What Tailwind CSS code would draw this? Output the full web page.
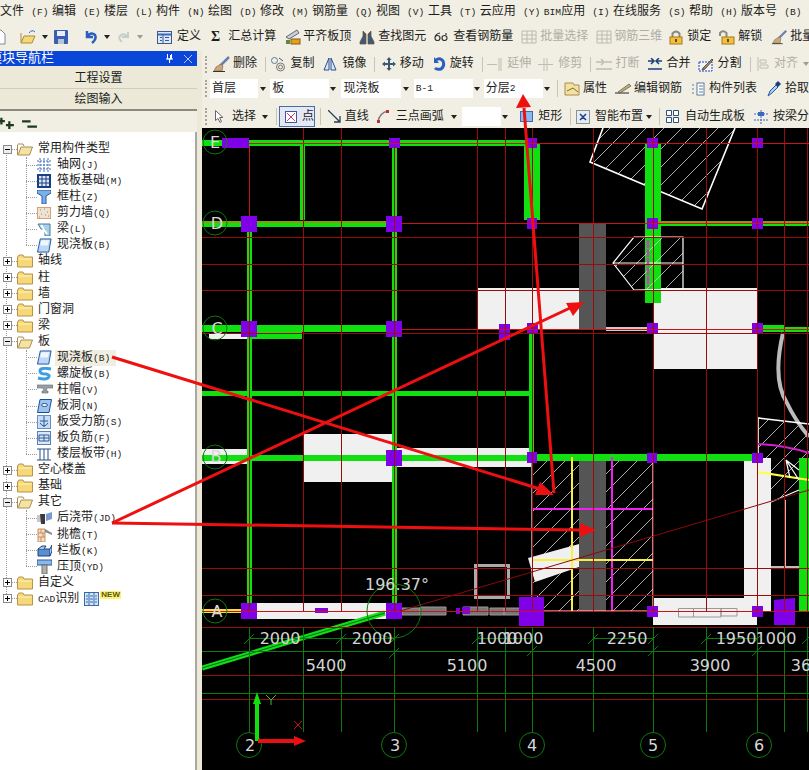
<!DOCTYPE html>
<html lang="zh">
<head>
<meta charset="UTF-8">
<title>钢筋算量</title>
<script src="https://cdn.jsdelivr.net/npm/@tailwindcss/browser@4"></script>
</head>
<body class="bg-[#ece9d8]">
<!-- shared icons -->
<svg class="hidden" width="0" height="0">
  <symbol id="caret" viewBox="0 0 6 4"><path d="M0 0H6L3 4Z" fill="#222"/></symbol>
  <symbol id="plus" viewBox="0 0 9 9"><rect x=".5" y=".5" width="8" height="8" fill="#fff" stroke="#8a8a8a"/><path d="M2 4.5H7M4.5 2V7" stroke="#000"/></symbol>
  <symbol id="minus" viewBox="0 0 9 9"><rect x=".5" y=".5" width="8" height="8" fill="#eee" stroke="#8a8a8a"/><path d="M2 4.5H7" stroke="#000"/></symbol>
  <symbol id="folder" viewBox="0 0 16 14"><path d="M.5 3V13H15.5V3H7L6 1H2Z" fill="#f6d878" stroke="#b8944a"/><path d="M1.500 5H14.500" stroke="#fff3c0"/></symbol>
  <symbol id="folderopen" viewBox="0 0 16 14"><path d="M.5 2.500V13H12.500L15.500 5H4L1.500 12" fill="#f6e3a4" stroke="#a88c50"/><path d="M1 2H6L7 4" fill="none" stroke="#a88c50"/></symbol>
  <symbol id="slab" viewBox="0 0 16 16"><path d="M3.500 1H15L12.500 15H.5Z" fill="#bcd8f8" stroke="#1a4f9a"/><path d="M4.500 2.500H13L11.500 8H3.500Z" fill="#eef6ff"/></symbol>
  <symbol id="lock" viewBox="0 0 16 16"><path d="M4.500 8V4.500Q8 .5 11.500 4.500V8" fill="none" stroke="#8a8a80" stroke-width="2"/><rect x="2" y="8" width="12" height="7" fill="#f0c040" stroke="#a87818"/><rect x="7" y="10" width="2" height="3" fill="#6a4a08"/></symbol>
  <symbol id="unlock" viewBox="0 0 16 16"><path d="M1 7V4Q4 .5 7.500 4V8" fill="none" stroke="#8a8a80" stroke-width="2"/><rect x="3" y="8" width="12" height="7" fill="#f0c040" stroke="#a87818"/><rect x="8" y="10" width="2" height="3" fill="#6a4a08"/></symbol>
  <symbol id="brush" viewBox="0 0 18 16"><path d="M16 1L7 10" stroke="#6a7fb0" stroke-width="2.500"/><path d="M8 8L3 11L1 15H9L10 10Z" fill="#c8a878" stroke="#806040" stroke-width=".6"/><path d="M0 15.500H12" stroke="#333"/></symbol>
  <symbol id="dis" viewBox="0 0 16 16"><path d="M1 2H15V14H1ZM1 6H15M1 10H15M6 2V14M11 2V14" fill="none" stroke="#bcbab0"/></symbol>
</svg>

<div class="relative w-[809px] h-[770px] overflow-hidden font-['Liberation_Mono','Noto_Sans_CJK_SC',monospace] text-[12px] leading-none text-[#1c1c1c]">

  <!-- menu -->
  <nav class="flex items-center gap-[3.5px] h-[21px] pt-[2px] bg-[#f1efe3] whitespace-nowrap">
    <span>文件 <small>(F)</small></span>
    <span>编辑 <small>(E)</small></span>
    <span>楼层 <small>(L)</small></span>
    <span>构件 <small>(N)</small></span>
    <span>绘图 <small>(D)</small></span>
    <span>修改 <small>(M)</small></span>
    <span>钢筋量 <small>(Q)</small></span>
    <span>视图 <small>(V)</small></span>
    <span>工具 <small>(T)</small></span>
    <span>云应用 <small>(Y)</small></span>
    <span><small>BIM</small>应用 <small>(I)</small></span>
    <span>在线服务 <small>(S)</small></span>
    <span>帮助 <small>(H)</small></span>
    <span>版本号 <small>(B)</small></span>
    <svg class="ml-[4px] w-[12px] h-[14px] shrink-0" viewBox="0 0 12 14"><circle cx="6" cy="7" r="5" fill="#e8b860"/><path d="M1 5Q6 0 11 5Z" fill="#8a5a20"/></svg>
  </nav>

  <!-- main toolbar -->
  <div class="flex items-center h-[30px] pt-[2px] bg-[#f1efe3] whitespace-nowrap">
    <svg class="ml-[-8px] w-[14px] h-4 shrink-0" viewBox="0 0 14 16"><path d="M1 1H9L13 5V15H1Z" fill="#fff" stroke="#7a8aa0"/></svg>
    <svg class="ml-[14px] w-4 h-4 shrink-0" viewBox="0 0 16 16"><path d="M1 4V14H12L15 7H4L1.500 13" fill="#f6d878" stroke="#a88c40"/><path d="M9 4Q12 0 15 3" fill="none" stroke="#2a6ad0"/></svg>
    <svg class="ml-[6px] w-[6px] h-1 shrink-0"><use href="#caret"/></svg>
    <svg class="ml-[6px] w-[14px] h-[14px] shrink-0" viewBox="0 0 14 14"><rect width="14" height="14" rx="1" fill="#3a5fb0"/><rect x="3" y="1" width="8" height="5" fill="#e8eef8"/><rect x="4" y="9" width="6" height="5" fill="#b8c4d8"/></svg>
    <span class="ml-[8px] w-px h-5 bg-[#c8c5b4]"></span>
    <svg class="ml-[8px] w-[13px] h-[14px] shrink-0" viewBox="0 0 13 14"><path d="M3 1V7H9M3 7Q7 1 11 5Q13 9 8 13" fill="none" stroke="#2a5fc0" stroke-width="2.500"/></svg>
    <svg class="ml-[7px] w-[6px] h-1 shrink-0"><use href="#caret"/></svg>
    <svg class="ml-[8px] w-[11px] h-[12px] shrink-0" viewBox="0 0 11 12"><path d="M10 1V6H4M10 6Q6 1 2 5Q0 8 4 11" fill="none" stroke="#c4cfc8" stroke-width="2"/></svg>
    <svg class="ml-[8px] w-[6px] h-1 shrink-0 opacity-40"><use href="#caret"/></svg>
    <svg class="ml-[14px] w-[15px] h-[13px] shrink-0" viewBox="0 0 15 13"><rect x=".5" y=".5" width="14" height="12" fill="#dce8f8" stroke="#3a5a90"/><path d="M1 3.500H14" stroke="#3a6ac0" stroke-width="2"/><path d="M6 3V12M3 6.500H5M3 9.500H5M8 6.500H12M8 9.500H12" stroke="#3a5a90"/></svg>
    <span class="ml-[5px]">定义</span>
    <span class="ml-[10px] font-bold font-['Liberation_Serif',serif] text-[14px]">Σ</span>
    <span class="ml-[8px]">汇总计算</span>
    <svg class="ml-[9px] w-4 h-4 shrink-0" viewBox="0 0 16 16"><path d="M1 8L12 1L14 4L4 10Z" fill="#c8d0d8" stroke="#667"/><rect x="6" y="10" width="9" height="5" fill="#e0a020" stroke="#8a5a10"/><rect x="1" y="11" width="4" height="4" fill="#5a8a3a"/></svg>
    <span class="ml-[2px]">平齐板顶</span>
    <svg class="ml-[8px] w-4 h-4 shrink-0" viewBox="0 0 16 16"><path d="M4 2V7L1 13V15H7V5ZM12 2V7L15 13V15H9V5Z" fill="#3a5a80" stroke="#7a4a20" stroke-width=".7"/></svg>
    <span class="ml-[3px]">查找图元</span>
    <svg class="ml-[8px] w-[14px] h-[10px] shrink-0" viewBox="0 0 14 10"><path d="M6 1Q1 2 1 6A2.500 2.500 0 1 0 6 6A2.500 2.500 0 1 0 1 6M8 6A2.500 2.500 0 1 0 13 6A2.500 2.500 0 1 0 8 6M12 3V1" fill="none" stroke="#333" stroke-width="1.200"/></svg>
    <span class="ml-[5px]">查看钢筋量</span>
    <svg class="ml-[8px] w-4 h-4 shrink-0"><use href="#dis"/></svg>
    <span class="ml-[3px] text-[#b0aea4]">批量选择</span>
    <svg class="ml-[8px] w-4 h-4 shrink-0"><use href="#dis"/></svg>
    <span class="ml-[2px] text-[#b0aea4]">钢筋三维</span>
    <svg class="ml-[6px] w-4 h-4 shrink-0"><use href="#lock"/></svg>
    <span class="ml-[3px]">锁定</span>
    <svg class="ml-[8px] w-4 h-4 shrink-0"><use href="#unlock"/></svg>
    <span class="ml-[3px]">解锁</span>
    <svg class="ml-[10px] w-4 h-4 shrink-0"><use href="#brush"/></svg>
    <span class="ml-[2px]">批量</span>
  </div>

  <div class="flex h-[719px]">
    <!-- module nav -->
    <aside class="w-[202px] shrink-0 flex flex-col pr-[5px]">
      <div class="flex items-center justify-between h-[15px] bg-[#0a46d8] text-white text-[13px] overflow-hidden whitespace-nowrap">
        <span class="ml-[-11px]">模块导航栏</span>
        <span class="flex items-center gap-[11px] pr-[5px]">
          <svg class="w-[7px] h-[9px]" viewBox="0 0 7 9"><path d="M1.500 0V5H5.500V0M0 5H7M3.500 5V9M4.500 1V5" fill="none" stroke="#fff"/></svg>
          <svg class="w-[8px] h-[8px]" viewBox="0 0 8 8"><path d="M0 0L8 8M8 0L0 8" stroke="#b8c8f0"/></svg>
        </span>
      </div>
      <div class="flex items-center justify-center h-[22px] mt-px pt-[2px] bg-[#ece9d8] border-b border-[#d0cdbc]">工程设置</div>
      <div class="flex items-center justify-center h-[22px] pt-[2px] bg-[#ece9d8] border-b-2 border-[#8c8a7c]">绘图输入</div>
      <div class="flex items-center h-[21px] pt-[5px] bg-[#f1efe3]">
        <svg class="ml-[-2px] w-[17px] h-[14px]" viewBox="0 0 15 11"><path d="M3 0V6M0 3H6M10 3V10M7 6.500H14" stroke="#1e3a1e" stroke-width="2"/></svg>
        <svg class="ml-[6px] w-[17px] h-[12px]" viewBox="0 0 16 11"><path d="M1 3H9M6 8H15" stroke="#1e3a1e" stroke-width="2"/></svg>
      </div>
      <div class="relative flex-1 pt-[9px] bg-white border-r-2 border-[#a8a8a0] whitespace-nowrap">
        <span class="absolute left-[6px] top-[17px] h-[449px] border-l border-dotted border-[#999]"></span>
        <span class="absolute left-[26px] top-[25px] h-[88px] border-l border-dotted border-[#999]"></span>
        <span class="absolute left-[26px] top-[218px] h-[104px] border-l border-dotted border-[#999]"></span>
        <span class="absolute left-[26px] top-[378px] h-[56px] border-l border-dotted border-[#999]"></span>

        <div class="relative flex items-center h-[16.07px]"><svg class="ml-[3px] w-[9px] h-[9px]"><use href="#minus"/></svg><span class="w-[5px] border-t border-dotted border-[#999]"></span><svg class="w-4 h-[14px]"><use href="#folderopen"/></svg><span class="ml-[5px]">常用构件类型</span></div>
        <div class="relative flex items-center h-[16.07px] pl-[26px]"><span class="w-[11px] border-t border-dotted border-[#999]"></span><svg class="w-[14px] h-[14px] mr-[2px]" viewBox="0 0 14 14"><path d="M0 3H14M0 7H14M0 11H14M3 0V14M7 0V14M11 0V14" stroke="#3a6ac0" stroke-dasharray="2 1"/></svg><span class="ml-[4px]">轴网<small>(J)</small></span></div>
        <div class="relative flex items-center h-[16.07px] pl-[26px]"><span class="w-[11px] border-t border-dotted border-[#999]"></span><svg class="w-[14px] h-[14px] mr-[2px]" viewBox="0 0 14 14"><rect x="1" y="1" width="12" height="12" fill="#dce8f8" stroke="#1a3f80" stroke-width="2"/><path d="M1 5H13M1 9H13M5 1V13M9 1V13" stroke="#1a3f80"/></svg><span class="ml-[4px]">筏板基础<small>(M)</small></span></div>
        <div class="relative flex items-center h-[16.07px] pl-[26px]"><span class="w-[11px] border-t border-dotted border-[#999]"></span><svg class="w-[14px] h-[14px] mr-[2px]" viewBox="0 0 14 14"><path d="M0 0H14V3L9 6V14H5V6L0 3Z" fill="#7ab0e8" stroke="#2a5a9a"/></svg><span class="ml-[4px]">框柱<small>(Z)</small></span></div>
        <div class="relative flex items-center h-[16.07px] pl-[26px]"><span class="w-[11px] border-t border-dotted border-[#999]"></span><svg class="w-[14px] h-[14px] mr-[2px]" viewBox="0 0 14 14"><rect x=".5" y="1.500" width="13" height="11" fill="#efe2d0" stroke="#d8a070"/><path d="M3 4H4M7 3H8M10 6H11M4 8H5M8 9H9M2 11H3M11 10H12" stroke="#8a8a8a"/></svg><span class="ml-[4px]">剪力墙<small>(Q)</small></span></div>
        <div class="relative flex items-center h-[16.07px] pl-[26px]"><span class="w-[11px] border-t border-dotted border-[#999]"></span><svg class="w-[14px] h-[14px] mr-[2px]" viewBox="0 0 14 14"><path d="M1 2H13V14H8V7H4Z" fill="#a8d0e8" stroke="#4a7a9a"/><path d="M4 3L10 12" stroke="#fff" stroke-width="2"/></svg><span class="ml-[4px]">梁<small>(L)</small></span></div>
        <div class="relative flex items-center h-[16.07px] pl-[26px]"><span class="w-[11px] border-t border-dotted border-[#999]"></span><svg class="w-[15px] h-[15px] mr-px"><use href="#slab"/></svg><span class="ml-[4px]">现浇板<small>(B)</small></span></div>

        <div class="relative flex items-center h-[16.07px]"><svg class="ml-[3px] w-[9px] h-[9px]"><use href="#plus"/></svg><span class="w-[5px] border-t border-dotted border-[#999]"></span><svg class="w-4 h-[14px]"><use href="#folder"/></svg><span class="ml-[5px]">轴线</span></div>
        <div class="relative flex items-center h-[16.07px]"><svg class="ml-[3px] w-[9px] h-[9px]"><use href="#plus"/></svg><span class="w-[5px] border-t border-dotted border-[#999]"></span><svg class="w-4 h-[14px]"><use href="#folder"/></svg><span class="ml-[5px]">柱</span></div>
        <div class="relative flex items-center h-[16.07px]"><svg class="ml-[3px] w-[9px] h-[9px]"><use href="#plus"/></svg><span class="w-[5px] border-t border-dotted border-[#999]"></span><svg class="w-4 h-[14px]"><use href="#folder"/></svg><span class="ml-[5px]">墙</span></div>
        <div class="relative flex items-center h-[16.07px]"><svg class="ml-[3px] w-[9px] h-[9px]"><use href="#plus"/></svg><span class="w-[5px] border-t border-dotted border-[#999]"></span><svg class="w-4 h-[14px]"><use href="#folder"/></svg><span class="ml-[5px]">门窗洞</span></div>
        <div class="relative flex items-center h-[16.07px]"><svg class="ml-[3px] w-[9px] h-[9px]"><use href="#plus"/></svg><span class="w-[5px] border-t border-dotted border-[#999]"></span><svg class="w-4 h-[14px]"><use href="#folder"/></svg><span class="ml-[5px]">梁</span></div>
        <div class="relative flex items-center h-[16.07px]"><svg class="ml-[3px] w-[9px] h-[9px]"><use href="#minus"/></svg><span class="w-[5px] border-t border-dotted border-[#999]"></span><svg class="w-4 h-[14px]"><use href="#folderopen"/></svg><span class="ml-[5px]">板</span></div>

        <div class="relative flex items-center h-[16.07px] pl-[26px]"><span class="w-[11px] border-t border-dotted border-[#999]"></span><svg class="w-[15px] h-[15px] mr-px"><use href="#slab"/></svg><span class="ml-[2px] pl-[2px] pr-[6px] py-[2px] bg-[#f0eee0]">现浇板<small>(B)</small></span></div>
        <div class="relative flex items-center h-[16.07px] pl-[26px]"><span class="w-[11px] border-t border-dotted border-[#999]"></span><svg class="w-4 h-[14px]" viewBox="0 0 16 14"><path d="M14 2Q3 0 3 4Q3 7 9 7Q14 8 11 11Q8 13 1 11" fill="none" stroke="#3aa0e0" stroke-width="3"/></svg><span class="ml-[4px]">螺旋板<small>(B)</small></span></div>
        <div class="relative flex items-center h-[16.07px] pl-[26px]"><span class="w-[11px] border-t border-dotted border-[#999]"></span><svg class="w-4 h-3" viewBox="0 0 16 12"><path d="M0 1H16V4H10L9 7H11V9H5V7H7L6 4H0Z" fill="#9aa0a8" stroke="#606870" stroke-width=".6"/></svg><span class="ml-[4px]">柱帽<small>(V)</small></span></div>
        <div class="relative flex items-center h-[16.07px] pl-[26px]"><span class="w-[11px] border-t border-dotted border-[#999]"></span><svg class="w-[15px] h-[14px] mr-px" viewBox="0 0 15 14"><path d="M3 .5H14.500L12 13.500H.5Z" fill="#9cc4ec" stroke="#1a4f9a"/><ellipse cx="7.500" cy="6" rx="3" ry="1.500" fill="#fff" stroke="#1a4f9a"/></svg><span class="ml-[4px]">板洞<small>(N)</small></span></div>
        <div class="relative flex items-center h-[16.07px] pl-[26px]"><span class="w-[11px] border-t border-dotted border-[#999]"></span><svg class="w-[14px] h-[14px] mr-[2px]" viewBox="0 0 14 14"><rect x=".5" y=".5" width="13" height="13" fill="#c8dcf4" stroke="#6a8ec0"/><path d="M7 1V12M3 6H11M3 8Q7 14 11 8" fill="none" stroke="#2a5a9a"/></svg><span class="ml-[4px]">板受力筋<small>(S)</small></span></div>
        <div class="relative flex items-center h-[16.07px] pl-[26px]"><span class="w-[11px] border-t border-dotted border-[#999]"></span><svg class="w-[14px] h-[14px] mr-[2px]" viewBox="0 0 14 14"><rect x=".5" y=".5" width="13" height="13" fill="#dce8f8" stroke="#5a80b8"/><path d="M2 4H12V10H2ZM2 7H12M7 4V10" fill="none" stroke="#2a5a9a"/></svg><span class="ml-[4px]">板负筋<small>(F)</small></span></div>
        <div class="relative flex items-center h-[16.07px] pl-[26px]"><span class="w-[11px] border-t border-dotted border-[#999]"></span><svg class="w-[14px] h-[14px] mr-[2px]" viewBox="0 0 14 14"><path d="M0 2H14M0 13H14M3 2V13M7 2V13M11 2V13" stroke="#2a4f80"/></svg><span class="ml-[4px]">楼层板带<small>(H)</small></span></div>

        <div class="relative flex items-center h-[16.07px]"><svg class="ml-[3px] w-[9px] h-[9px]"><use href="#plus"/></svg><span class="w-[5px] border-t border-dotted border-[#999]"></span><svg class="w-4 h-[14px]"><use href="#folder"/></svg><span class="ml-[5px]">空心楼盖</span></div>
        <div class="relative flex items-center h-[16.07px]"><svg class="ml-[3px] w-[9px] h-[9px]"><use href="#plus"/></svg><span class="w-[5px] border-t border-dotted border-[#999]"></span><svg class="w-4 h-[14px]"><use href="#folder"/></svg><span class="ml-[5px]">基础</span></div>
        <div class="relative flex items-center h-[16.07px]"><svg class="ml-[3px] w-[9px] h-[9px]"><use href="#minus"/></svg><span class="w-[5px] border-t border-dotted border-[#999]"></span><svg class="w-4 h-[14px]"><use href="#folderopen"/></svg><span class="ml-[5px]">其它</span></div>

        <div class="relative flex items-center h-[16.07px] pl-[26px]"><span class="w-[11px] border-t border-dotted border-[#999]"></span><svg class="w-[15px] h-3 mr-px" viewBox="0 0 15 12"><path d="M0 3H5V10H0Z" fill="#c8c8c8"/><path d="M3 2H8V12H4Z" fill="#3a3a40"/><path d="M9 2L15 0V7L9 9Z" fill="#7a9ad0"/></svg><span class="ml-[4px]">后浇带<small>(JD)</small></span></div>
        <div class="relative flex items-center h-[16.07px] pl-[26px]"><span class="w-[11px] border-t border-dotted border-[#999]"></span><svg class="w-[15px] h-[14px] mr-px" viewBox="0 0 15 14"><path d="M1 1H8V14H1ZM1 5H8M1 9H8M4 1V5M6 5V9M4 9V14" fill="#f4e0c8" stroke="#c07840" stroke-width=".8"/><path d="M8 1L15 5V7L8 4Z" fill="#8a8a8a"/></svg><span class="ml-[4px]">挑檐<small>(T)</small></span></div>
        <div class="relative flex items-center h-[16.07px] pl-[26px]"><span class="w-[11px] border-t border-dotted border-[#999]"></span><svg class="w-[15px] h-3 mr-px" viewBox="0 0 15 12"><path d="M1 4H13V11H1Z" fill="#5a90d0" stroke="#1a3f80"/><path d="M1 4L5 1H9L7 4M13 4L15 0V6L13 11" fill="#a8c8e8" stroke="#1a3f80"/></svg><span class="ml-[4px]">栏板<small>(K)</small></span></div>
        <div class="relative flex items-center h-[16.07px] pl-[26px]"><span class="w-[11px] border-t border-dotted border-[#999]"></span><svg class="w-[15px] h-[15px] mr-px" viewBox="0 0 15 15"><path d="M0 1H15V6H0Z" fill="#8ab8e8" stroke="#2a5a9a"/><rect x="5" y="6" width="5" height="9" fill="#b0b0b0" stroke="#707070"/></svg><span class="ml-[4px]">压顶<small>(YD)</small></span></div>

        <div class="relative flex items-center h-[16.07px]"><svg class="ml-[3px] w-[9px] h-[9px]"><use href="#plus"/></svg><span class="w-[5px] border-t border-dotted border-[#999]"></span><svg class="w-4 h-[14px]"><use href="#folder"/></svg><span class="ml-[5px]">自定义</span></div>
        <div class="relative flex items-center h-[16.07px]"><svg class="ml-[3px] w-[9px] h-[9px]"><use href="#plus"/></svg><span class="w-[5px] border-t border-dotted border-[#999]"></span><svg class="w-4 h-[14px]"><use href="#folder"/></svg><span class="ml-[5px]"><small>CAD</small>识别</span>
          <svg class="ml-[5px] w-[15px] h-[14px]" viewBox="0 0 15 14"><rect x=".5" y=".5" width="14" height="13" fill="#d0e4f8" stroke="#3a6aa8"/><path d="M5 1V13M10 1V13M2 4H4M2 7H4M2 10H4M6 4H9M6 7H9M6 10H9M11 4H13M11 7H13M11 10H13" stroke="#3a6aa8"/></svg>
          <span class="self-start ml-[1px] px-px bg-[#fff27a] text-[#5a5a00] text-[8px] font-bold font-['Liberation_Sans',sans-serif]">NEW</span>
        </div>
      </div>
    </aside>

    <main class="flex-1 min-w-0 flex flex-col overflow-hidden">
      <!-- edit toolbar -->
      <div class="flex items-center h-[23px] pt-[3px] bg-[#f1efe3] whitespace-nowrap">
        <span class="ml-[3px] h-[17px] border-l-2 border-dotted border-[#a8a594]"></span>
        <svg class="ml-[6px] w-[18px] h-4 shrink-0"><use href="#brush"/></svg>
        <span class="ml-[2px]">删除</span>
        <span class="ml-[8px] w-px h-[15px] bg-[#c8c5b4]"></span>
        <svg class="ml-[5px] w-4 h-4 shrink-0" viewBox="0 0 16 16"><rect x="1.500" y="1.500" width="6" height="6" rx="3" fill="none" stroke="#5a7a9a"/><circle cx="10.500" cy="11" r="4" fill="none" stroke="#777"/><circle cx="10.500" cy="11" r="2" fill="none" stroke="#777"/><path d="M9 2L13 5" stroke="#555"/></svg>
        <span class="ml-[4px]">复制</span>
        <svg class="ml-[9px] w-[14px] h-[14px] shrink-0" viewBox="0 0 14 14"><path d="M6 1V13H1ZM8 1V13H13Z" fill="#dce8f8" stroke="#2a4f90"/></svg>
        <span class="ml-[5px]">镜像</span>
        <span class="ml-[8px] w-px h-[15px] bg-[#c8c5b4]"></span>
        <svg class="ml-[7px] w-[14px] h-[14px] shrink-0" viewBox="0 0 14 14"><path d="M7 0L9.500 3H8V6H11V4.500L14 7L11 9.500V8H8V11H9.500L7 14L4.500 11H6V8H3V9.500L0 7L3 4.500V6H6V3H4.500Z" fill="#3a5a70"/></svg>
        <span class="ml-[4px]">移动</span>
        <svg class="ml-[8px] w-[14px] h-[14px] shrink-0" viewBox="0 0 14 14"><path d="M4 3Q8 0 11 4Q13 9 9 12Q5 13 3 11" fill="none" stroke="#2a5fc0" stroke-width="3"/><path d="M2 0V6H7Z" fill="#2a5fc0"/></svg>
        <span class="ml-[4px]">旋转</span>
        <span class="ml-[8px] w-px h-[15px] bg-[#c8c5b4]"></span>
        <svg class="ml-[5px] w-[15px] h-[13px] shrink-0" viewBox="0 0 15 13"><path d="M0 6.500H10M12 0V13M14 0V13" stroke="#c0beb4"/></svg>
        <span class="ml-[5px] text-[#b0aea4]">延伸</span>
        <svg class="ml-[7px] w-[15px] h-[13px] shrink-0" viewBox="0 0 15 13"><path d="M0 6.500H15M6 0V13M9 0V13" stroke="#c0beb4"/></svg>
        <span class="ml-[5px] text-[#b0aea4]">修剪</span>
        <span class="ml-[8px] w-px h-[15px] bg-[#c8c5b4]"></span>
        <svg class="ml-[5px] w-4 h-[13px] shrink-0" viewBox="0 0 16 13"><path d="M0 4H7M9 4H16M0 11H16M5 1L8 4L5 7" fill="none" stroke="#c0beb4" stroke-width="1.500"/></svg>
        <span class="ml-[4px] text-[#b0aea4]">打断</span>
        <svg class="ml-[7px] w-4 h-[13px] shrink-0" viewBox="0 0 16 13"><path d="M1 3H7M9 3H15M1 11H15M4 0L7 3L4 6M12 0L9 3L12 6" fill="none" stroke="#1a3f80" stroke-width="1.500"/></svg>
        <span class="ml-[4px]">合并</span>
        <svg class="ml-[7px] w-4 h-[15px] shrink-0" viewBox="0 0 16 15"><path d="M1 5H14V14H1Z" fill="#f4f4f4" stroke="#1a3fc0" stroke-dasharray="2 1"/><path d="M5 11L14 2L15 3L7 12L4 13Z" fill="#a88868" stroke="#554"/></svg>
        <span class="ml-[4px]">分割</span>
        <span class="ml-[8px] w-px h-[15px] bg-[#c8c5b4]"></span>
        <svg class="ml-[7px] w-[12px] h-[14px] shrink-0" viewBox="0 0 12 14"><path d="M1 0V14M3 3H9V6H3ZM3 8H11V11H3Z" fill="none" stroke="#c0beb4"/></svg>
        <span class="ml-[5px] text-[#b0aea4]">对齐</span>
        <svg class="ml-[5px] w-[6px] h-1 shrink-0 opacity-40"><use href="#caret"/></svg>
      </div>

      <!-- attribute toolbar -->
      <div class="flex items-center h-[27px] pt-[2px] bg-[#f1efe3] whitespace-nowrap">
        <span class="ml-[3px] h-[17px] border-l-2 border-dotted border-[#a8a594]"></span>
        <span class="ml-[3px] flex items-center w-[49px] h-[19px] pl-[2px] bg-white">首层</span>
        <svg class="ml-[2px] w-[6px] h-1 shrink-0"><use href="#caret"/></svg>
        <span class="ml-[4px] flex items-center w-[60px] h-[19px] pl-[2px] bg-white">板</span>
        <svg class="ml-[1px] w-[6px] h-1 shrink-0"><use href="#caret"/></svg>
        <span class="ml-[5px] flex items-center w-[60px] h-[19px] pl-[2px] bg-white">现浇板</span>
        <svg class="ml-[2px] w-[6px] h-1 shrink-0"><use href="#caret"/></svg>
        <span class="ml-[5px] flex items-center w-[60px] h-[19px] pl-[2px] bg-white"><small>B-1</small></span>
        <svg class="ml-[1px] w-[6px] h-1 shrink-0"><use href="#caret"/></svg>
        <span class="ml-[4px] flex items-center w-[60px] h-[19px] pl-[2px] bg-white">分层<small>2</small></span>
        <svg class="ml-[1px] w-[6px] h-1 shrink-0"><use href="#caret"/></svg>
        <span class="ml-[7px] w-px h-[17px] bg-[#c8c5b4]"></span>
        <svg class="ml-[6px] w-[16px] h-[14px] shrink-0" viewBox="0 0 16 14"><path d="M1 1H9L10 3H15V13H1Z" fill="#f6e0a0" stroke="#a88c50"/><path d="M3 9L9 6L14 10" fill="none" stroke="#5a7a3a"/></svg>
        <span class="ml-[3px]">属性</span>
        <svg class="ml-[7px] w-[18px] h-[12px] shrink-0" viewBox="0 0 18 12"><path d="M1 10H15" stroke="#222"/><path d="M4 9L15 1L17 3L6 10Z" fill="#c8a878" stroke="#554" stroke-width=".7"/></svg>
        <span class="ml-[2px]">编辑钢筋</span>
        <svg class="ml-[9px] w-[14px] h-[14px] shrink-0" viewBox="0 0 14 14"><rect x="6" y="1" width="7" height="12" fill="#fff" stroke="#5a7a9a"/><path d="M8 4H12M8 7H12M8 10H12M1 3H3M1 7H3M1 11H3" stroke="#5a7a9a"/></svg>
        <span class="ml-[4px]">构件列表</span>
        <svg class="ml-[10px] w-[14px] h-[16px] shrink-0" viewBox="0 0 14 16"><path d="M1 15L3 10L9 4L11 6L5 12Z" fill="#a8d0f0" stroke="#2a5a9a"/><path d="M8 3L11 0L14 3L11 6Z" fill="#1a3f80"/></svg>
        <span class="ml-[4px]">拾取</span>
      </div>

      <!-- draw toolbar -->
      <div class="flex items-center h-[27px] pt-[4px] bg-[#f1efe3] whitespace-nowrap">
        <span class="ml-[3px] h-[17px] border-l-2 border-dotted border-[#a8a594]"></span>
        <svg class="ml-[8px] w-[9px] h-[13px] shrink-0" viewBox="0 0 9 13"><path d="M.5 .5V10.500L3 8.500L5 12.500L6.500 11.500L4.500 7.500H8Z" fill="#fff" stroke="#666"/></svg>
        <span class="ml-[8px]">选择</span>
        <svg class="ml-[6px] w-[6px] h-1 shrink-0"><use href="#caret"/></svg>
        <span class="ml-[8px] w-px h-[17px] bg-[#c8c5b4]"></span>
        <span class="ml-[2px] flex items-center w-[39px] h-[21px] pl-[5px] bg-[#e4e8f4] border border-[#4a6aa8]">
          <svg class="w-[12px] h-[12px] shrink-0" viewBox="0 0 12 12"><rect x=".5" y=".5" width="11" height="11" fill="#fff" stroke="#3a5a9a"/><path d="M2 2L10 10M10 2L2 10" stroke="#c03a8a"/></svg>
          <span class="ml-[5px]">点</span>
        </span>
        <span class="ml-[5px] w-px h-[17px] bg-[#c8c5b4]"></span>
        <svg class="ml-[7px] w-[13px] h-[13px] shrink-0" viewBox="0 0 13 13"><path d="M0 0L12 12M12 6V12H6" fill="none" stroke="#2a3f5a" stroke-width="1.300"/></svg>
        <span class="ml-[4px]">直线</span>
        <svg class="ml-[8px] w-[12px] h-[13px] shrink-0" viewBox="0 0 12 13"><path d="M1 12Q2 3 11 1" fill="none" stroke="#7a7a7a" stroke-width="1.300"/><rect y="10" width="3" height="3" fill="#c03030"/><rect x="9" width="3" height="3" fill="#c03030"/></svg>
        <span class="ml-[7px]">三点画弧</span>
        <svg class="ml-[7px] w-[6px] h-1 shrink-0"><use href="#caret"/></svg>
        <span class="ml-[5px] w-[46px] h-[19px] bg-white"></span>
        <svg class="ml-[1px] w-[6px] h-1 shrink-0"><use href="#caret"/></svg>
        <svg class="ml-[12px] w-[13px] h-[11px] shrink-0" viewBox="0 0 13 11"><rect x=".5" y=".5" width="12" height="10" fill="#8ab8f0" stroke="#3a6ab0"/></svg>
        <span class="ml-[5px]">矩形</span>
        <span class="ml-[8px] w-px h-[17px] bg-[#c8c5b4]"></span>
        <svg class="ml-[5px] w-[14px] h-[14px] shrink-0" viewBox="0 0 14 14"><rect x=".5" y=".5" width="13" height="13" fill="#e4ecf8" stroke="#333" stroke-dasharray="1 1"/><path d="M4 4L7 7L10 4M4 10L7 7L10 10" fill="none" stroke="#1a3f80" stroke-width="1.500"/></svg>
        <span class="ml-[5px]">智能布置</span>
        <svg class="ml-[3px] w-[6px] h-1 shrink-0"><use href="#caret"/></svg>
        <span class="ml-[7px] w-px h-[17px] bg-[#c8c5b4]"></span>
        <svg class="ml-[6px] w-[13px] h-[13px] shrink-0" viewBox="0 0 13 13"><path d="M.5 .5H5.500V5.500H.5ZM7.500 .5H12.500V5.500H7.500ZM.5 7.500H5.500V12.500H.5ZM7.500 7.500H12.500V12.500H7.500Z" fill="#fff" stroke="#2a4f80"/></svg>
        <span class="ml-[6px]">自动生成板</span>
        <svg class="ml-[9px] w-[14px] h-[14px] shrink-0" viewBox="0 0 14 14"><path d="M7 0V14M0 4H14M0 10H14" stroke="#3a6ac0" stroke-dasharray="2 1"/><rect x="4" y="2" width="6" height="4" fill="#3a6ac0"/></svg>
        <span class="ml-[5px]">按梁分</span>
      </div>

      <!-- drawing canvas, coordinates are page pixels -->
      <svg class="block w-[607px] h-[642px] shrink-0 bg-black font-['DejaVu_Sans',sans-serif]" viewBox="202 128 607 642">
        <defs>
          <pattern id="hatch" width="18" height="18" patternUnits="userSpaceOnUse">
            <path d="M0 18L18 0M-4 4L4 -4M14 22L22 14" stroke="#d8d8d8" stroke-width=".8"/>
          </pattern>
        </defs>

        <!-- hatched areas -->
        <path d="M603 128L590 162L702 209L735 128Z" fill="url(#hatch)"/>
        <path d="M603 128L590 162L702 209L735 128" fill="none" stroke="#fff" stroke-width="1.600"/>
        <rect x="532" y="457" width="121" height="154" fill="url(#hatch)"/>
        <path d="M758 418L809 424V490L771 502V472L758 460Z" fill="url(#hatch)"/>

        <!-- slabs -->
        <g fill="#f0f0f0">
          <rect x="478" y="288" width="101" height="42"/>
          <rect x="653" y="288" width="104" height="81"/>
          <rect x="303" y="434" width="90" height="48"/>
          <rect x="396" y="448" width="135" height="19"/>
          <rect x="202" y="449" width="45" height="15"/>
          <rect x="209" y="333" width="40" height="6"/>
          <rect x="257" y="603" width="129" height="16"/>
          <rect x="653" y="598" width="104" height="27"/>
          <rect x="744" y="458" width="27" height="140"/>
          <rect x="757" y="598" width="14" height="13"/>
          <path d="M528 558L579 544V567L535 582Z"/>
        </g>
        <rect x="606" y="327" width="41" height="4" fill="#d0c8c8"/>
        <path d="M579 223H606V330H579ZM579 457H606V611H579Z" fill="#555"/>

        <!-- beams -->
        <g fill="#10e010">
          <rect x="202" y="140" width="328" height="6"/>
          <rect x="300" y="143" width="5" height="77"/>
          <rect x="202" y="221" width="192" height="6"/>
          <rect x="247" y="224" width="5" height="387"/>
          <rect x="392" y="143" width="5" height="468"/>
          <rect x="202" y="325" width="192" height="7"/>
          <rect x="252" y="332" width="50" height="7"/>
          <rect x="202" y="391" width="328" height="5"/>
          <rect x="202" y="455" width="329" height="6"/>
          <rect x="531" y="454" width="226" height="7"/>
          <rect x="524" y="143" width="16" height="77"/>
          <rect x="645" y="143" width="16" height="160"/>
          <rect x="653" y="221" width="156" height="5"/>
          <rect x="763" y="325" width="21" height="7"/>
          <rect x="784" y="327" width="25" height="5"/>
          <rect x="529" y="333" width="5" height="124"/>
          <rect x="799" y="458" width="10" height="153"/>
        </g>
        <rect x="653" y="221" width="156" height="2" fill="#8a9a10"/>
        <rect x="202" y="221" width="192" height="2" fill="#8a9a10"/>
        <path d="M202 668L385 613" stroke="#10e010" stroke-width="5"/>
        <path d="M202 668L385 613" stroke="#063" stroke-width="1"/>
        <rect x="202" y="609" width="39" height="4" fill="#f0e040"/>

        <!-- inner outlines -->
        <path d="M634 237H683V289L634 290L613 263ZM613 263H683" fill="url(#hatch)" stroke="#fff" stroke-width="1.200"/>
        <path d="M648 240V287" stroke="#c040c0" stroke-width="2.500" stroke-dasharray="8 1"/>
        <path d="M783 333Q772 380 787 403Q795 420 809 437" fill="none" stroke="#bbb" stroke-width="4"/>
        <path d="M758 462V418L809 424" fill="none" stroke="#fff" stroke-width="1.600"/>
        <path d="M758 444Q785 445 809 453" fill="none" stroke="#d020d0" stroke-width="2"/>
        <path d="M758 472L809 480" stroke="#ffff40" stroke-width="2"/>
        <path d="M786 460L799 470M786 460L799 480M786 460L790 478M771 502L799 490" stroke="#fff" stroke-width="1.200"/>
        <path d="M785 500V566M771 567H799" stroke="#c8b8b8" stroke-width="2"/>
        <path d="M532 509H653M612 457V611" stroke="#f020f0" stroke-width="2"/>
        <path d="M572 457V611M532 560H653" stroke="#f8f040" stroke-width="2"/>
        <path d="M532 457V611H653V457" fill="none" stroke="#f4e4e4" stroke-width="1.200"/>
        <rect x="475.500" y="565.500" width="33" height="32" fill="none" stroke="#aaa" stroke-width="3"/>
        <path d="M402 608H420V615H402ZM420 607H446V615H420ZM463 607H488V615H463ZM490 608H504V615H490ZM504 608H532V615H504Z" fill="#777" stroke="#999"/>
        <path d="M678.500 608.500H693.500V617H678.500ZM693.500 608.500H721V617H693.500ZM721 608.500H737V616H721Z" fill="none" stroke="#999"/>

        <!-- columns -->
        <g fill="#8000e8">
          <rect x="222" y="138" width="27" height="10"/>
          <rect x="389" y="138" width="11" height="10"/>
          <rect x="241" y="216" width="16" height="16"/>
          <rect x="386" y="216" width="16" height="16"/>
          <rect x="241" y="321" width="16" height="16"/>
          <rect x="386" y="321" width="16" height="16"/>
          <rect x="386" y="450" width="16" height="16"/>
          <rect x="241" y="603" width="16" height="16"/>
          <rect x="386" y="603" width="16" height="16"/>
          <rect x="315" y="608" width="13" height="5"/>
          <rect x="456" y="608" width="4" height="6"/>
          <rect x="462" y="607" width="8" height="7"/>
          <rect x="499" y="324" width="11" height="16"/>
          <rect x="527" y="138" width="10" height="10"/>
          <rect x="647" y="138" width="11" height="10"/>
          <rect x="752" y="138" width="11" height="10"/>
          <rect x="527" y="218" width="10" height="11"/>
          <rect x="647" y="218" width="11" height="11"/>
          <rect x="752" y="218" width="11" height="11"/>
          <rect x="527" y="323" width="11" height="11"/>
          <rect x="647" y="323" width="11" height="11"/>
          <rect x="752" y="323" width="11" height="11"/>
          <rect x="527" y="452" width="10" height="11"/>
          <rect x="647" y="453" width="10" height="10"/>
          <rect x="752" y="453" width="11" height="10"/>
          <rect x="647" y="606" width="11" height="11"/>
          <rect x="752" y="606" width="11" height="11"/>
          <rect x="519" y="597" width="25" height="29"/>
          <path d="M774 600L783 599L795 598V625H774Z"/>
        </g>

        <!-- axis lines -->
        <path d="M303.500 128V611M341.500 128V611M394.500 146V611M477.500 128V611M505.500 128V611M532.500 128V611M593.500 128V611M653.500 128V611M706.500 128V611M757.500 128V611M784.500 128V611M807.500 128V611M249.500 232V611" stroke="#980c0c"/>
        <path d="M202 237.500H809M202 264.500H809M202 290.500H809M202 333.500H809M202 568.500H809M202 595.500H809M202 627.500H809M202 675.500H809M202 699.500H809" stroke="#980c0c"/>
        <path d="M249.500 146V216M249 143.500H809M402 223.500H809M402 329.500H809M532 611.500H809M202 611.500H532" stroke="#c81414"/>
        <path d="M400 611L809 490" stroke="#8a0a0a"/>

        <!-- dimensions -->
        <path d="M249.500 627V732M303.500 627V732M341.500 627V732M394.500 627V732M477.500 627V732M505.500 627V732M532.500 627V732M593.500 627V732M653.500 627V732M706.500 627V732M757.500 627V732M784.500 627V732M807.500 627V732" stroke="#0c7a0c"/>
        <path d="M249 638.500H394M477 638.500H532M593 638.500H653M706 638.500H757M202 651.500H809M202 693.500H809" stroke="#0c7a0c"/>
        <path d="M244 644L254 634M336 644L346 634M389 644L399 634M472 644L482 634M527 656L537 646M588 644L598 634M648 644L658 634M701 644L711 634M752 644L762 634M779 644L789 634M802 644L812 634M389 658L399 648M648 656L658 646M752 656L762 646" stroke="#0c7a0c"/>
        <circle cx="394" cy="611" r="27" fill="none" stroke="#0c7a0c"/>

        <g fill="#d4d4d4" font-size="16" text-anchor="middle">
          <text x="280" y="644">2000</text>
          <text x="372" y="644">2000</text>
          <text x="497" y="644">1000</text>
          <text x="523" y="644">1000</text>
          <text x="627" y="644">2250</text>
          <text x="736" y="644">1950</text>
          <text x="776" y="644">1000</text>
          <text x="326" y="671">5400</text>
          <text x="467" y="671">5100</text>
          <text x="596" y="671">4500</text>
          <text x="710" y="671">3900</text>
          <text x="801" y="671">36</text>
          <text x="397" y="590">196.37°</text>
        </g>

        <!-- axis bubbles -->
        <g fill="none" stroke="#0c7a0c">
          <circle cx="249" cy="745" r="12.500"/>
          <circle cx="394" cy="745" r="12.500"/>
          <circle cx="532" cy="745" r="12.500"/>
          <circle cx="653" cy="745" r="12.500"/>
          <circle cx="759" cy="745" r="12.500"/>
          <circle cx="215" cy="142" r="12"/>
          <circle cx="215" cy="223" r="12"/>
          <circle cx="215" cy="328" r="12"/>
          <circle cx="215" cy="457" r="12"/>
          <circle cx="215" cy="611" r="12"/>
        </g>
        <g fill="#d8d8d8" font-size="16" text-anchor="middle">
          <text x="250" y="751">2</text>
          <text x="395" y="751">3</text>
          <text x="532" y="751">4</text>
          <text x="653" y="751">5</text>
          <text x="759" y="751">6</text>
          <text x="215" y="148">E</text>
          <text x="217" y="229">D</text>
          <text x="217" y="334">C</text>
          <text x="216" y="462">B</text>
          <text x="217" y="617">A</text>
        </g>

        <!-- ucs -->
        <path d="M257 741V702" stroke="#10e010" stroke-width="4"/>
        <path d="M253 704L257 692L261 704Z" fill="#10e010"/>
        <path d="M258 741H296" stroke="#e81010" stroke-width="4"/>
        <path d="M294 736L306 741L294 746Z" fill="#e81010"/>
        <path d="M266 695L271 700L276 695M271 700V705" fill="none" stroke="#40c040"/>
        <path d="M294 721L302 729M302 721L294 729" stroke="#d01010"/>
      </svg>
    </main>
  </div>

  <!-- red annotation arrows over the whole window -->
  <svg class="absolute left-0 top-0 w-[809px] h-[770px] pointer-events-none" viewBox="0 0 809 770">
    <g stroke="#ee1010" stroke-width="3" fill="none">
      <path d="M112 357L540 489"/>
      <path d="M112 523L570 308"/>
      <path d="M112 523L582 530"/>
      <path d="M524 108L554 493"/>
    </g>
    <g fill="#ee1010">
      <path d="M554 495L535 495L540 482Z"/>
      <path d="M584 302L573 316L566 303Z"/>
      <path d="M596 530L580 523L580 537Z"/>
      <path d="M523 94L516 108L531 107Z"/>
    </g>
  </svg>
</div>
</body>
</html>
